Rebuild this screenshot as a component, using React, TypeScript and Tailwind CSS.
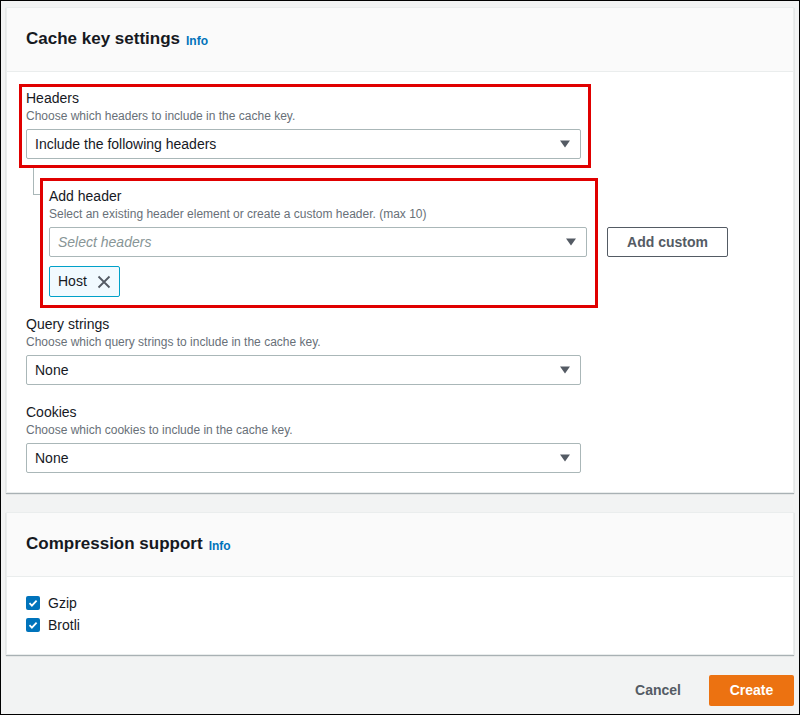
import React from 'react';

const font = { fontFamily: '"Liberation Sans", Arial, sans-serif' };

const Caret: React.FC = () => (
    <svg width="12" height="8" viewBox="0 0 12 8" className="shrink-0">
        <path d="M1 0.5h10L6 7.5z" fill="#545b64" />
    </svg>
);

const Select: React.FC<{ value: string; placeholder?: boolean; width: string }> = ({ value, placeholder, width }) => (
    <div
        className={`${width} h-[30px] flex items-center justify-between pl-[8px] pr-[9px] bg-white border border-[#aab7b8] rounded-[2px]`}
    >
        <span className={placeholder ? 'text-[14px] italic text-[#879596]' : 'text-[14px] text-[#16191f]'}>{value}</span>
        <Caret />
    </div>
);

const Field: React.FC<{ label: string; hint: string; value: string }> = ({ label, hint, value }) => (
    <div className="flex flex-col">
        <span className="text-[14px] leading-[20px] text-[#16191f]">{label}</span>
        <span className="text-[12px] leading-[16px] text-[#687078]">{hint}</span>
        <div className="mt-[5px]">
            <Select value={value} width="w-[555px]" />
        </div>
    </div>
);

const Checkbox: React.FC<{ label: string }> = ({ label }) => (
    <label className="flex items-center gap-[8px] h-[22px]">
        <span className="w-[14px] h-[14px] rounded-[2px] bg-[#0073bb] flex items-center justify-center">
            <svg width="10" height="10" viewBox="0 0 10 10">
                <path d="M1.5 5.2l2.4 2.4L8.6 2.6" fill="none" stroke="white" strokeWidth="1.8" />
            </svg>
        </span>
        <span className="text-[14px] text-[#16191f]">{label}</span>
    </label>
);

const CardHeader: React.FC<{ title: string }> = ({ title }) => (
    <div className="h-[64px] flex items-center px-[19px] bg-[#fafafa] border-b border-[#eaeded]">
        <h2 className="text-[17px] font-bold text-[#16191f] -mt-[1px]">{title}</h2>
        <span className="ml-[6px] mt-[2px] text-[12px] font-bold text-[#0073bb]">Info</span>
    </div>
);

const App: React.FC = () => {
    return (
        <div style={font} className="w-[800px] h-[715px] overflow-hidden bg-[#f2f3f3] border border-black px-[5px] pt-[6px]">
            {/* Cache key settings */}
            <div className="bg-white border border-[#eaeded] shadow-[0_1px_1px_0_rgba(0,28,36,0.3)]">
                <CardHeader title="Cache key settings" />
                <div className="pl-[12px] pt-[12px] pb-[19px]">
                    {/* Headers */}
                    <div className="w-[572px] border-[3px] border-[#e00000] pl-[4px] pt-[1px] pb-[6px]">
                        <Field label="Headers" hint="Choose which headers to include in the cache key." value="Include the following headers" />
                    </div>

                    {/* Add header */}
                    <div className="flex items-start mt-[10px]">
                        <div className="w-[21px] shrink-0">
                            <div className="ml-[14px] w-[7px] h-[27px] -mt-[10px] border-l border-b border-[#aab7b8]" />
                        </div>
                        <div className="w-[558px] border-[3px] border-[#e00000] pl-[6px] pt-[5px] pb-[8px]">
                            <div className="text-[14px] leading-[20px] text-[#16191f]">Add header</div>
                            <div className="text-[12px] leading-[16px] text-[#687078]">
                                Select an existing header element or create a custom header. (max 10)
                            </div>
                            <div className="mt-[5px]">
                                <Select value="Select headers" placeholder width="w-[538px]" />
                            </div>
                            <div className="mt-[9px] inline-flex items-center gap-[10px] h-[31px] px-[8px] bg-[#f1faff] border border-[#00a1c9] rounded-[2px]">
                                <span className="text-[14px] text-[#16191f]">Host</span>
                                <svg width="14" height="14" viewBox="0 0 14 14">
                                    <path d="M1.5 1.5l11 11M12.5 1.5l-11 11" stroke="#545b64" strokeWidth="1.8" />
                                </svg>
                            </div>
                        </div>
                        <button className="ml-[9px] mt-[49px] w-[121px] h-[30px] bg-white border border-[#545b64] rounded-[2px] text-[14px] font-bold text-[#545b64]">
                            Add custom
                        </button>
                    </div>

                    <div className="pl-[7px] mt-[6px] flex flex-col gap-[17px]">
                        <Field label="Query strings" hint="Choose which query strings to include in the cache key." value="None" />
                        <Field label="Cookies" hint="Choose which cookies to include in the cache key." value="None" />
                    </div>
                </div>
            </div>

            {/* Compression support */}
            <div className="mt-[19px] bg-white border border-[#eaeded] shadow-[0_1px_1px_0_rgba(0,28,36,0.3)]">
                <CardHeader title="Compression support" />
                <div className="px-[19px] pt-[15px] pb-[18px] flex flex-col">
                    <Checkbox label="Gzip" />
                    <Checkbox label="Brotli" />
                </div>
            </div>

            {/* Footer */}
            <div className="mt-[20px] flex items-center justify-end gap-[28px]">
                <span className="text-[14px] font-bold text-[#545b64]">Cancel</span>
                <button className="w-[85px] h-[31px] bg-[#ec7211] rounded-[2px] text-[14px] font-bold text-white">Create</button>
            </div>
        </div>
    );
};

export default App;
